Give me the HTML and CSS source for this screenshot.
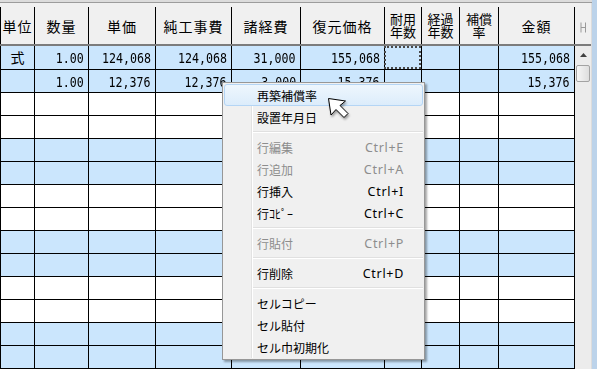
FILE: index.html
```html
<!DOCTYPE html>
<html lang="ja">
<head>
    <meta charset="UTF-8">
    <title>補償明細</title>
    <link rel="stylesheet" href="styles.css">
</head>
<body>
    <div class="screen">
        <div class="frame">
            <div class="main">
                <div class="topbar"></div>
                <div class="grid-area">
                    <div class="sheet">
                        <div class="row head">
                            <div class="cell">単位</div>
                            <div class="cell">数量</div>
                            <div class="cell">単価</div>
                            <div class="cell">純工事費</div>
                            <div class="cell">諸経費</div>
                            <div class="cell">復元価格</div>
                            <div class="cell two">耐用<br>年数</div>
                            <div class="cell two">経過<br>年数</div>
                            <div class="cell two">補償<br>率</div>
                            <div class="cell">金額</div>
                        </div>
                        <div class="row blue first">
                            <div class="cell mid">式</div>
                            <div class="cell num"><span>1.00</span></div>
                            <div class="cell num"><span>124,068</span></div>
                            <div class="cell num"><span>124,068</span></div>
                            <div class="cell num"><span>31,000</span></div>
                            <div class="cell num"><span>155,068</span></div>
                            <div class="cell focus"></div>
                            <div class="cell"></div>
                            <div class="cell"></div>
                            <div class="cell num"><span>155,068</span></div>
                        </div>
                        <div class="row blue">
                            <div class="cell"></div>
                            <div class="cell num"><span>1.00</span></div>
                            <div class="cell num"><span>12,376</span></div>
                            <div class="cell num"><span>12,376</span></div>
                            <div class="cell num"><span>3,000</span></div>
                            <div class="cell num"><span>15,376</span></div>
                            <div class="cell"></div>
                            <div class="cell"></div>
                            <div class="cell"></div>
                            <div class="cell num"><span>15,376</span></div>
                        </div>
                        <div class="row"><div class="cell"></div><div class="cell"></div><div class="cell"></div><div class="cell"></div><div class="cell"></div><div class="cell"></div><div class="cell"></div><div class="cell"></div><div class="cell"></div><div class="cell"></div></div>
                        <div class="row"><div class="cell"></div><div class="cell"></div><div class="cell"></div><div class="cell"></div><div class="cell"></div><div class="cell"></div><div class="cell"></div><div class="cell"></div><div class="cell"></div><div class="cell"></div></div>
                        <div class="row blue"><div class="cell"></div><div class="cell"></div><div class="cell"></div><div class="cell"></div><div class="cell"></div><div class="cell"></div><div class="cell"></div><div class="cell"></div><div class="cell"></div><div class="cell"></div></div>
                        <div class="row blue"><div class="cell"></div><div class="cell"></div><div class="cell"></div><div class="cell"></div><div class="cell"></div><div class="cell"></div><div class="cell"></div><div class="cell"></div><div class="cell"></div><div class="cell"></div></div>
                        <div class="row"><div class="cell"></div><div class="cell"></div><div class="cell"></div><div class="cell"></div><div class="cell"></div><div class="cell"></div><div class="cell"></div><div class="cell"></div><div class="cell"></div><div class="cell"></div></div>
                        <div class="row"><div class="cell"></div><div class="cell"></div><div class="cell"></div><div class="cell"></div><div class="cell"></div><div class="cell"></div><div class="cell"></div><div class="cell"></div><div class="cell"></div><div class="cell"></div></div>
                        <div class="row blue"><div class="cell"></div><div class="cell"></div><div class="cell"></div><div class="cell"></div><div class="cell"></div><div class="cell"></div><div class="cell"></div><div class="cell"></div><div class="cell"></div><div class="cell"></div></div>
                        <div class="row blue"><div class="cell"></div><div class="cell"></div><div class="cell"></div><div class="cell"></div><div class="cell"></div><div class="cell"></div><div class="cell"></div><div class="cell"></div><div class="cell"></div><div class="cell"></div></div>
                        <div class="row"><div class="cell"></div><div class="cell"></div><div class="cell"></div><div class="cell"></div><div class="cell"></div><div class="cell"></div><div class="cell"></div><div class="cell"></div><div class="cell"></div><div class="cell"></div></div>
                        <div class="row"><div class="cell"></div><div class="cell"></div><div class="cell"></div><div class="cell"></div><div class="cell"></div><div class="cell"></div><div class="cell"></div><div class="cell"></div><div class="cell"></div><div class="cell"></div></div>
                        <div class="row blue"><div class="cell"></div><div class="cell"></div><div class="cell"></div><div class="cell"></div><div class="cell"></div><div class="cell"></div><div class="cell"></div><div class="cell"></div><div class="cell"></div><div class="cell"></div></div>
                        <div class="row blue"><div class="cell"></div><div class="cell"></div><div class="cell"></div><div class="cell"></div><div class="cell"></div><div class="cell"></div><div class="cell"></div><div class="cell"></div><div class="cell"></div><div class="cell"></div></div>
                    </div>
                    <div class="vscroll">
                        <div class="vs-head">
                            <svg width="7" height="11" viewBox="0 0 7 11">
                                <path d="M1 0.5V10.5M5.5 0.5V10.5M1 5.5H5.5" stroke="#9a9a9a" stroke-width="1" fill="none"/>
                            </svg>
                        </div>
                        <div class="vs-up">
                            <svg width="7" height="4" viewBox="0 0 7 4"><path d="M0 4L3.5 0L7 4Z" fill="#404040"/></svg>
                        </div>
                        <div class="vs-thumb"></div>
                    </div>
                </div>
            </div>
            <div class="edge"></div>
        </div>

        <div class="menu">
            <div class="item hot"><span>再築補償率</span></div>
            <div class="item"><span>設置年月日</span></div>
            <div class="sep"></div>
            <div class="item off"><span>行編集</span><span class="key">Ctrl+E</span></div>
            <div class="item off"><span>行追加</span><span class="key">Ctrl+A</span></div>
            <div class="item"><span>行挿入</span><span class="key">Ctrl+I</span></div>
            <div class="item"><span>行ｺﾋﾟｰ</span><span class="key">Ctrl+C</span></div>
            <div class="sep"></div>
            <div class="item off"><span>行貼付</span><span class="key">Ctrl+P</span></div>
            <div class="sep"></div>
            <div class="item"><span>行削除</span><span class="key">Ctrl+D</span></div>
            <div class="sep"></div>
            <div class="item"><span>セルコピー</span></div>
            <div class="item"><span>セル貼付</span></div>
            <div class="item"><span>セル巾初期化</span></div>
        </div>

        <svg class="cursor" width="26" height="26" viewBox="0 0 26 26">
            <path d="M1.5 1.5L18.5 4L13 8.5L21 16.5L17 20.5L9 12.5L4 18Z" fill="#fff" stroke="#000" stroke-width="1" stroke-linejoin="round"/>
        </svg>
    </div>
</body>
</html>
```

FILE: styles.css
```css
body {
    margin: 0;
    font-family: "Noto Sans CJK JP", sans-serif;
    color: #000;
}
.screen {
    position: relative;
    width: 597px;
    height: 369px;
    overflow: hidden;
    background: #f0f0f0;
}
.frame {
    display: flex;
    height: 100%;
}
.main {
    width: 592px;
}
.edge {
    flex: 1;
    background: #bcd3ea;
}
.topbar {
    height: 2px;
    background: #dcdcdc;
    border-bottom: 1px solid #9c9c9c;
}
.grid-area {
    display: flex;
}
.sheet {
    width: 575px;
}
.row {
    display: grid;
    grid-template-columns: 34px 54px 67px 76px 69px 84px 37px 38px 39px 77px;
    height: 23px;
    box-sizing: border-box;
    border-bottom: 1px solid #000;
    background: #fff;
}
.row.first {
    height: 24px;
}
.row.blue {
    background: #cbe6fd;
}
.cell {
    border-left: 1px solid #000;
    box-sizing: border-box;
    font-size: 14px;
    line-height: 22px;
    overflow: hidden;
    white-space: nowrap;
}
.cell:last-child {
    border-right: 1px solid #000;
}
.row.head {
    height: 43px;
    padding-top: 4px;
    background: #f0f0f0;
    border-bottom: 2px solid #7c7c7c;
}
.head .cell {
    display: flex;
    align-items: center;
    justify-content: center;
    text-align: center;
    letter-spacing: 1px;
}
.head .cell.two {
    font-size: 13px;
    line-height: 13px;
    letter-spacing: 0;
    padding-bottom: 1px;
}
.mid {
    text-align: center;
}
.num {
    text-align: right;
    padding-right: 4px;
}
.num span {
    display: inline-block;
    font-family: "DejaVu Sans Mono", monospace;
    font-size: 14px;
    transform: scaleX(0.83);
    transform-origin: right center;
}
.focus {
    outline: 2px dotted #4a4a4a;
    outline-offset: -2px;
}
.vscroll {
    width: 17px;
    border-right: 1px solid #dcdcdc;
    background: #ececec;
}
.vs-head {
    display: flex;
    justify-content: center;
    height: 43px;
    box-sizing: border-box;
    padding-top: 19px;
    background: #f0f0f0;
    border-bottom: 2px solid #7c7c7c;
}
.vs-up {
    height: 18px;
    display: flex;
    align-items: center;
    justify-content: center;
}
.vs-thumb {
    height: 15px;
    margin: 1px 1px 0 1px;
    border: 1px solid #a3a3a3;
    border-radius: 2px;
    background: linear-gradient(to right, #f6f6f6, #dedede);
}
.menu {
    position: absolute;
    left: 222px;
    top: 82px;
    width: 199px;
    padding: 1px;
    background: #f0f0f0;
    border: 1px solid #979797;
    box-shadow: 2px 2px 2px rgba(0, 0, 0, 0.35);
    font-size: 12px;
}
.menu::before {
    content: "";
    position: absolute;
    left: 28px;
    top: 1px;
    bottom: 1px;
    width: 1px;
    background: #e2e2e2;
    border-right: 1px solid #fff;
}
.item {
    position: relative;
    display: flex;
    justify-content: space-between;
    align-items: center;
    height: 22px;
    box-sizing: border-box;
    padding: 0 18px 0 32px;
    border: 1px solid transparent;
}
.item.hot {
    border-color: #b4d5f5;
    border-radius: 3px;
    background: linear-gradient(#eef6fd, #dcecfb);
}
.item.off {
    color: #8d8d8d;
}
.key {
    font-family: "Noto Sans", sans-serif;
    font-size: 12.5px;
    letter-spacing: 0.7px;
}
.sep {
    position: relative;
    height: 8px;
}
.sep::after {
    content: "";
    position: absolute;
    left: 29px;
    right: 0;
    top: 3px;
    height: 1px;
    background: #e0e0e0;
    border-bottom: 1px solid #fff;
}
.cursor {
    position: absolute;
    left: 327px;
    top: 97px;
    filter: drop-shadow(1px 2px 1px rgba(0, 0, 0, 0.35));
}
```
